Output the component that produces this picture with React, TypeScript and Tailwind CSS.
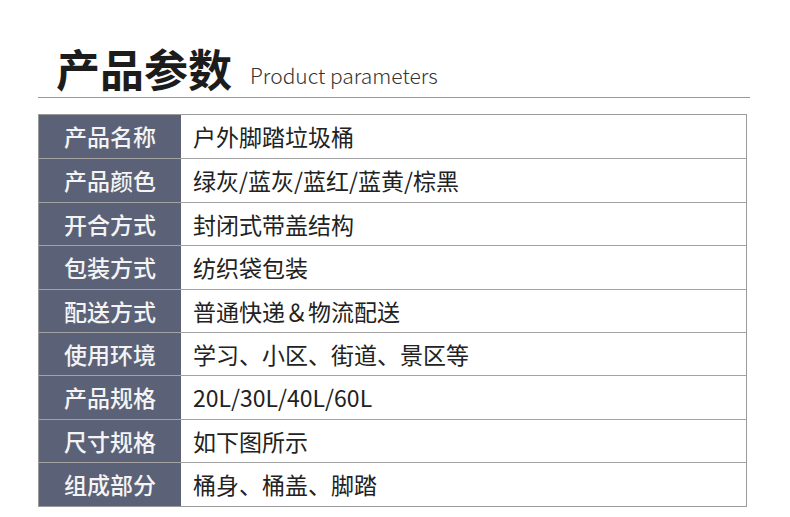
const rows: [string, string][] = [
  ["产品名称", "户外脚踏垃圾桶"],
  ["产品颜色", "绿灰/蓝灰/蓝红/蓝黄/棕黑"],
  ["开合方式", "封闭式带盖结构"],
  ["包装方式", "纺织袋包装"],
  ["配送方式", "普通快递＆物流配送"],
  ["使用环境", "学习、小区、街道、景区等"],
  ["产品规格", "20L/30L/40L/60L"],
  ["尺寸规格", "如下图所示"],
  ["组成部分", "桶身、桶盖、脚踏"],
];

export default function App() {
  return (
    <main
      className="w-[790px] h-[517px] bg-white pt-[46px]"
      style={{ fontFamily: '"Noto Sans CJK SC", "Noto Sans", sans-serif' }}
    >
      {/* 标题 */}
      <div className="ml-[38px] w-[712px] flex items-baseline pl-[18px] pb-[7px] border-b border-[#9a9a9a]">
        <h1 className="text-[44px] leading-none font-bold text-[#1c1c1c]">产品参数</h1>
        <span className="ml-[18px] text-[21px] leading-none font-light text-[#333] -translate-y-[3px]">
          Product parameters
        </span>
      </div>

      {/* 参数表 */}
      <div className="ml-[38px] mt-[16px] w-[709px] border border-[#9a9a9a]">
        {rows.map(([label, value], i) => (
          <div
            key={label}
            className={`grid grid-cols-[142px_1fr] h-[43.4px] ${i > 0 ? "border-t border-[#a3a3a3]" : ""}`}
          >
            <div className="bg-[#5b6277] flex items-center justify-center text-[23px] font-medium text-[#f4f4f4]">
              {label}
            </div>
            <div className="flex items-center pl-[12px] text-[23px] text-[#222]">{value}</div>
          </div>
        ))}
      </div>
    </main>
  );
}
